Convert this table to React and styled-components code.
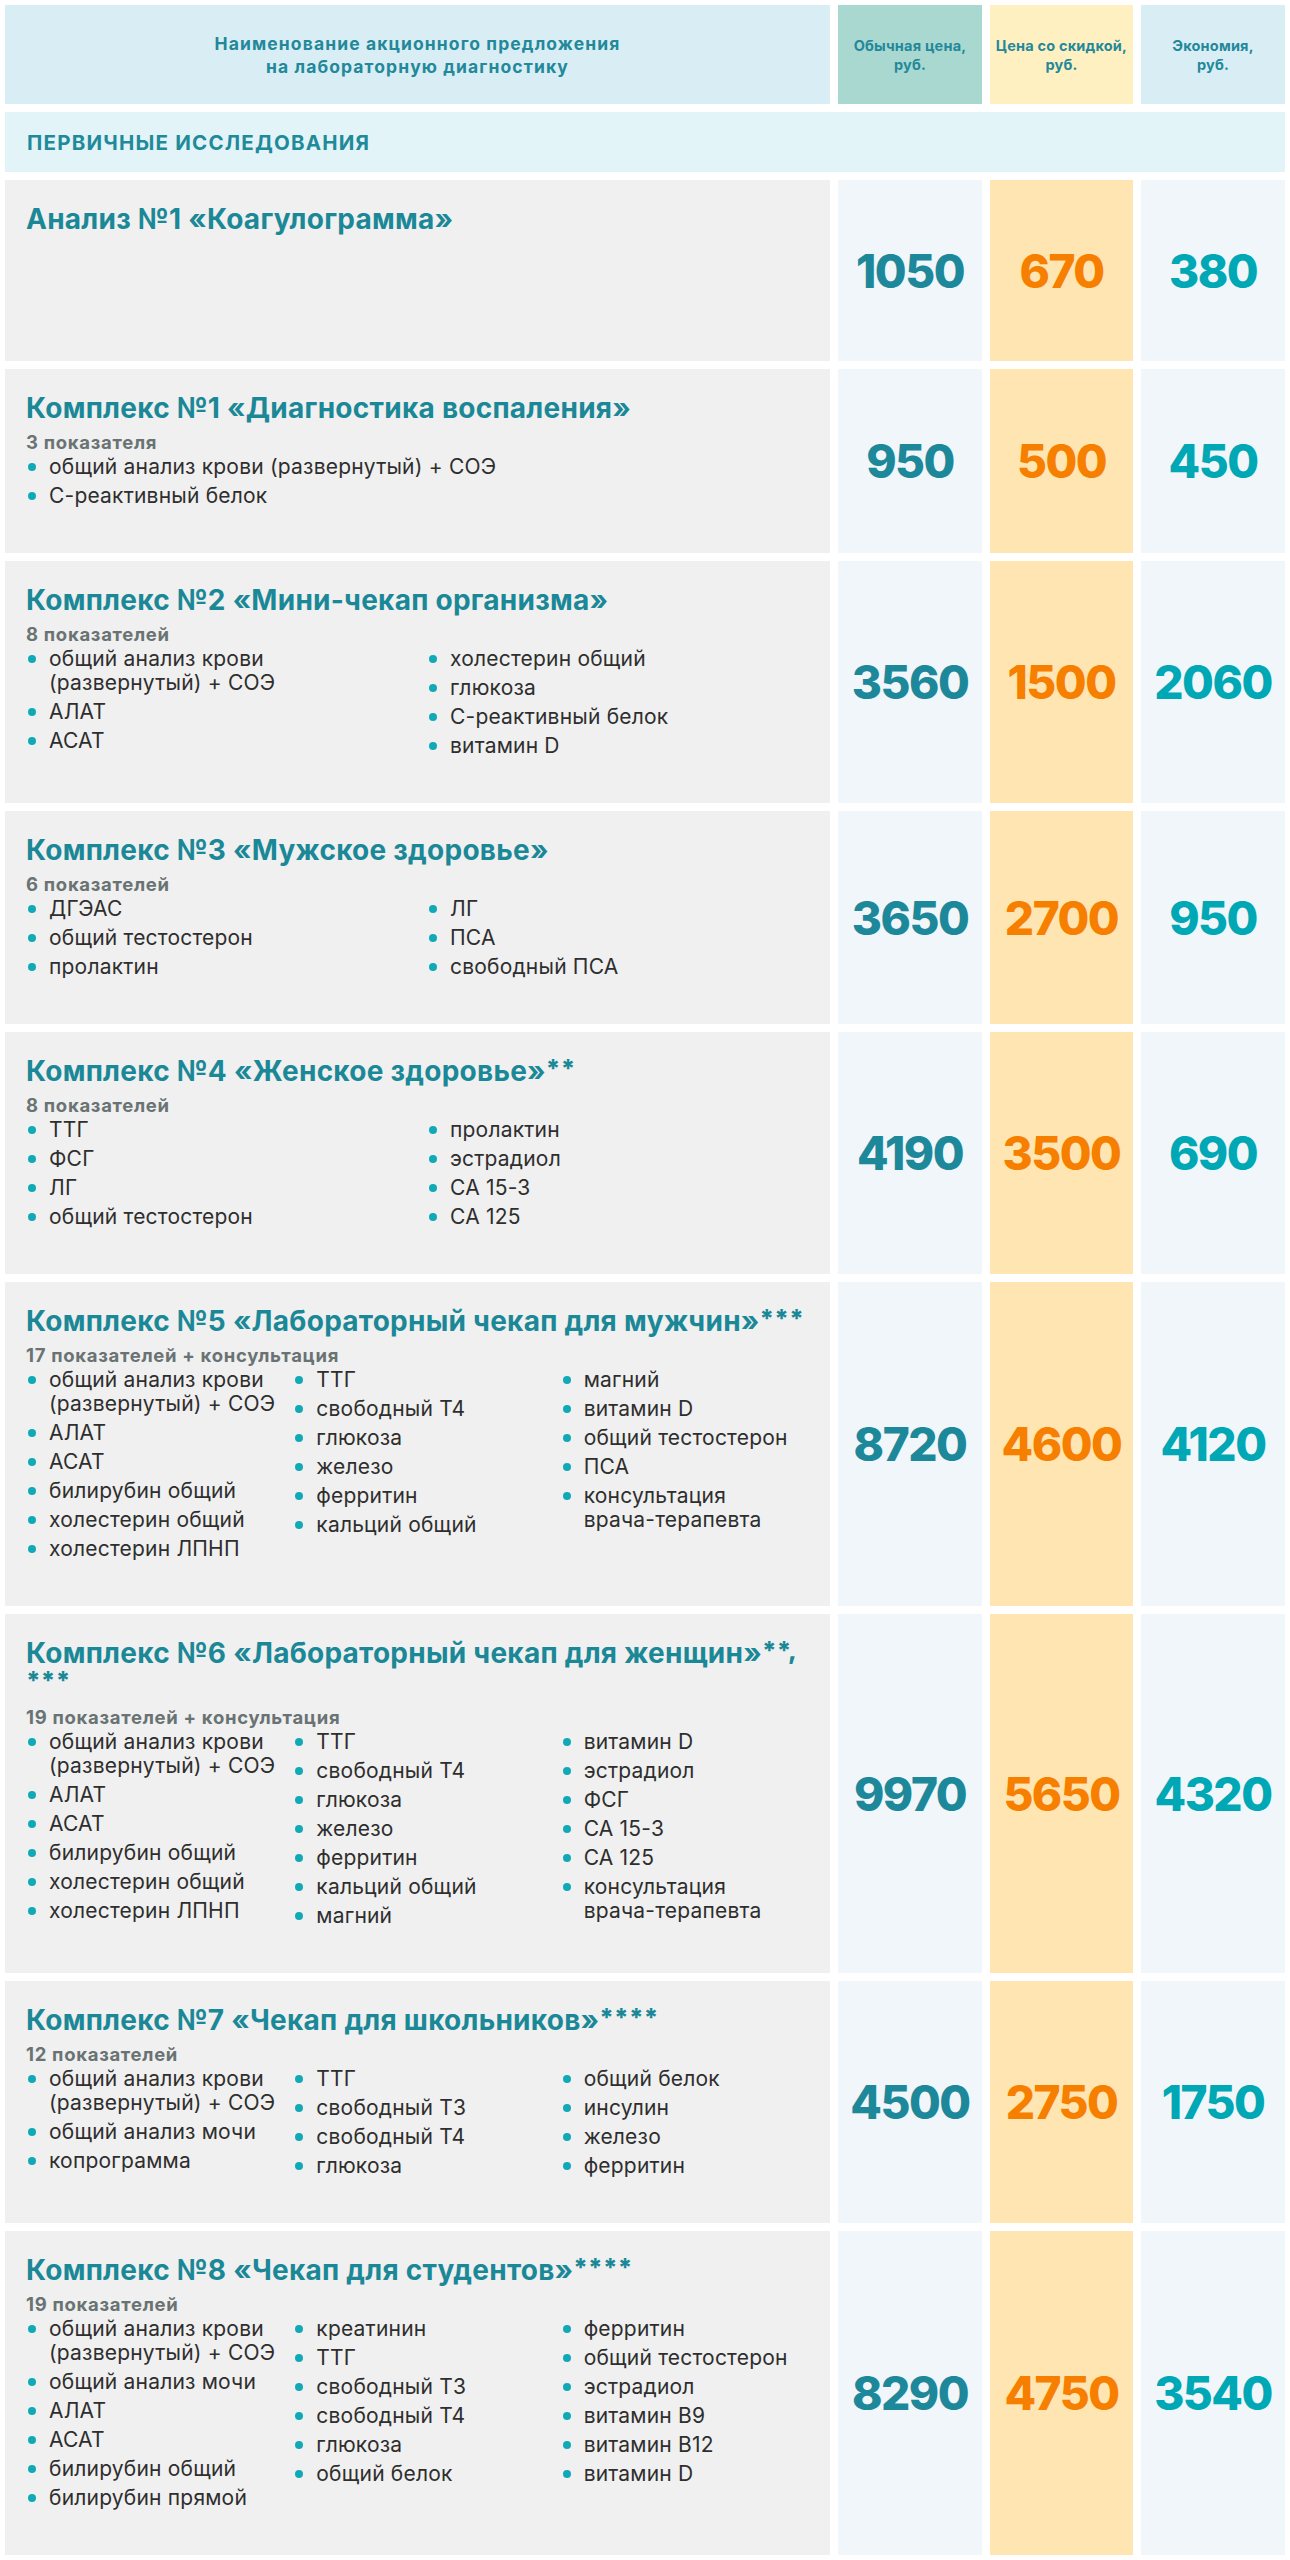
import React from 'react';
import styled, { createGlobalStyle } from 'styled-components';

const GlobalStyle = createGlobalStyle`
  html, body {
    margin: 0;
    padding: 0;
    background: #fff;
  }
  body {
    font-family: 'Inter', 'Noto Sans', sans-serif;
    -webkit-font-smoothing: antialiased;
  }
`;

const rows = [
  {
    title: 'Анализ №1 «Коагулограмма»',
    prices: [1050, 670, 380],
  },
  {
    title: 'Комплекс №1 «Диагностика воспаления»',
    count: '3 показателя',
    cols: [['общий анализ крови (развернутый) + СОЭ', 'С-реактивный белок']],
    prices: [950, 500, 450],
  },
  {
    title: 'Комплекс №2 «Мини-чекап организма»',
    count: '8 показателей',
    cols: [
      ['общий анализ крови\n(развернутый) + СОЭ', 'АЛАТ', 'АСАТ'],
      ['холестерин общий', 'глюкоза', 'С-реактивный белок', 'витамин D'],
    ],
    prices: [3560, 1500, 2060],
  },
  {
    title: 'Комплекс №3 «Мужское здоровье»',
    count: '6 показателей',
    cols: [
      ['ДГЭАС', 'общий тестостерон', 'пролактин'],
      ['ЛГ', 'ПСА', 'свободный ПСА'],
    ],
    prices: [3650, 2700, 950],
  },
  {
    title: 'Комплекс №4 «Женское здоровье»',
    stars: '**',
    count: '8 показателей',
    cols: [
      ['ТТГ', 'ФСГ', 'ЛГ', 'общий тестостерон'],
      ['пролактин', 'эстрадиол', 'СА 15-3', 'СА 125'],
    ],
    prices: [4190, 3500, 690],
  },
  {
    title: 'Комплекс №5 «Лабораторный чекап для мужчин»',
    stars: '***',
    count: '17 показателей + консультация',
    cols: [
      [
        'общий анализ крови\n(развернутый) + СОЭ',
        'АЛАТ',
        'АСАТ',
        'билирубин общий',
        'холестерин общий',
        'холестерин ЛПНП',
      ],
      ['ТТГ', 'свободный Т4', 'глюкоза', 'железо', 'ферритин', 'кальций общий'],
      ['магний', 'витамин D', 'общий тестостерон', 'ПСА', 'консультация\nврача-терапевта'],
    ],
    prices: [8720, 4600, 4120],
  },
  {
    title: 'Комплекс №6 «Лабораторный чекап для женщин»',
    stars: '**,\n***',
    count: '19 показателей + консультация',
    cols: [
      [
        'общий анализ крови\n(развернутый) + СОЭ',
        'АЛАТ',
        'АСАТ',
        'билирубин общий',
        'холестерин общий',
        'холестерин ЛПНП',
      ],
      ['ТТГ', 'свободный Т4', 'глюкоза', 'железо', 'ферритин', 'кальций общий', 'магний'],
      ['витамин D', 'эстрадиол', 'ФСГ', 'СА 15-3', 'СА 125', 'консультация\nврача-терапевта'],
    ],
    prices: [9970, 5650, 4320],
  },
  {
    title: 'Комплекс №7 «Чекап для школьников»',
    stars: '****',
    count: '12 показателей',
    cols: [
      ['общий анализ крови\n(развернутый) + СОЭ', 'общий анализ мочи', 'копрограмма'],
      ['ТТГ', 'свободный Т3', 'свободный Т4', 'глюкоза'],
      ['общий белок', 'инсулин', 'железо', 'ферритин'],
    ],
    prices: [4500, 2750, 1750],
  },
  {
    title: 'Комплекс №8 «Чекап для студентов»',
    stars: '****',
    count: '19 показателей',
    cols: [
      [
        'общий анализ крови\n(развернутый) + СОЭ',
        'общий анализ мочи',
        'АЛАТ',
        'АСАТ',
        'билирубин общий',
        'билирубин прямой',
      ],
      ['креатинин', 'ТТГ', 'свободный Т3', 'свободный Т4', 'глюкоза', 'общий белок'],
      ['ферритин', 'общий тестостерон', 'эстрадиол', 'витамин В9', 'витамин В12', 'витамин D'],
    ],
    prices: [8290, 4750, 3540],
  },
];

const priceTones = [
  { bg: '#f0f6f9', color: '#1d8899' },
  { bg: '#ffe5b1', color: '#f77f00' },
  { bg: '#f0f6f9', color: '#00a8b5' },
];

const headTones = ['#a9d8d1', '#fff0c1', '#d8eef4'];

const Table = styled.div`
  width: 1290px;
  box-sizing: border-box;
  padding: 5px 5px 7px;
  display: grid;
  grid-template-columns: 1fr 144px 143px 144px;
  gap: 8px;
`;

const HeadCell = styled.div`
  height: 99px;
  background: ${(props) => props.bg};
  display: flex;
  align-items: center;
  justify-content: center;
  text-align: center;
  color: #23889a;
  font-weight: 700;
  font-size: ${(props) => (props.wide ? '17.5px' : '14.5px')};
  line-height: ${(props) => (props.wide ? '23px' : '19px')};
  letter-spacing: ${(props) => (props.wide ? '1.1px' : '0.2px')};
`;

const Section = styled.div`
  grid-column: 1 / -1;
  height: 60px;
  background: #e3f4f8;
  display: flex;
  align-items: center;
  padding-left: 22px;
  color: #1f8a9a;
  font-weight: 700;
  font-size: 20.5px;
  letter-spacing: 1.2px;
`;

const NameCell = styled.div`
  box-sizing: border-box;
  min-height: 181px;
  background: #f0f0f0;
  padding: 24px 2px 45px 21px;
`;

const Title = styled.div`
  color: #1b8898;
  font-weight: 700;
  font-size: 28px;
  line-height: 30px;
  letter-spacing: 0.25px;
  white-space: pre-line;
`;

const Stars = styled.span`
  font-size: 25px;
  font-weight: 800;
  vertical-align: 4px;
  line-height: 20px;
`;

const Count = styled.div`
  margin-top: 8px;
  color: #6a7373;
  font-weight: 700;
  font-size: 18.5px;
  line-height: 22px;
  letter-spacing: 0.7px;
`;

const List = styled.div`
  margin-top: 2px;
  display: grid;
  grid-template-columns: repeat(${(props) => props.cols}, 1fr);
`;

const Column = styled.ul`
  margin: 0;
  padding: 0;
  list-style: none;
  display: flex;
  flex-direction: column;
  gap: 5px;
`;

const Item = styled.li`
  display: flex;
  font-size: 21px;
  line-height: 24px;
  letter-spacing: 0.2px;
  color: #2e2e2e;
  white-space: pre-line;

  &::before {
    content: '';
    flex: none;
    width: 8px;
    height: 8px;
    margin: 8px 13px 0 2px;
    border-radius: 50%;
    background: #12a9b6;
  }
`;

const PriceCell = styled.div`
  background: ${(props) => props.bg};
  color: ${(props) => props.color};
  display: flex;
  align-items: center;
  justify-content: center;
  font-weight: 800;
  font-size: 46px;
  letter-spacing: -1.5px;
`;

const OfferRow = ({ row }) => (
  <>
    <NameCell>
      <Title>
        {row.title}
        {row.stars && <Stars>{row.stars}</Stars>}
      </Title>
      {row.count && <Count>{row.count}</Count>}
      {row.cols && (
        <List cols={row.cols.length}>
          {row.cols.map((col, i) => (
            <Column key={i}>
              {col.map((item) => (
                <Item key={item}>{item}</Item>
              ))}
            </Column>
          ))}
        </List>
      )}
    </NameCell>
    {row.prices.map((price, i) => (
      <PriceCell key={i} bg={priceTones[i].bg} color={priceTones[i].color}>
        {price}
      </PriceCell>
    ))}
  </>
);

const App = () => (
  <>
    <GlobalStyle />
    <Table>
      <HeadCell wide bg="#d8eef4">
        Наименование акционного предложения
        <br />
        на лабораторную диагностику
      </HeadCell>
      <HeadCell bg={headTones[0]}>
        Обычная цена,
        <br />
        руб.
      </HeadCell>
      <HeadCell bg={headTones[1]}>
        Цена со скидкой,
        <br />
        руб.
      </HeadCell>
      <HeadCell bg={headTones[2]}>
        Экономия,
        <br />
        руб.
      </HeadCell>
      <Section>ПЕРВИЧНЫЕ ИССЛЕДОВАНИЯ</Section>
      {rows.map((row) => (
        <OfferRow key={row.title} row={row} />
      ))}
    </Table>
  </>
);

export default App;
